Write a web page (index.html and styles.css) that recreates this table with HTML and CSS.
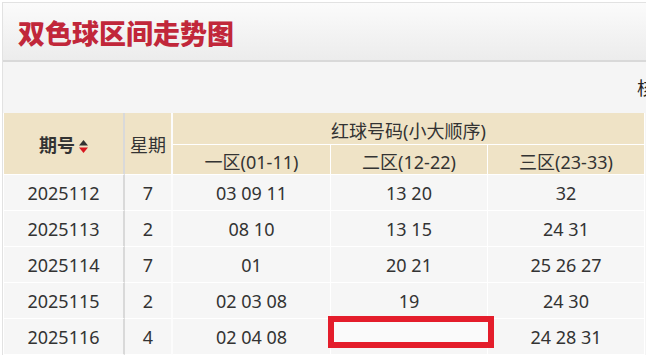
FILE: index.html
```html
<!DOCTYPE html>
<html lang="zh-CN">
<head>
<meta charset="utf-8">
<title>双色球区间走势图</title>
<link rel="stylesheet" href="styles.css">
</head>
<body>
<div class="page">
  <header class="title-bar">
    <h1 class="title">双色球区间走势图</h1>
  </header>
  <div class="toolbar"><span class="tool-text">核查</span></div>
  <table class="trend">
    <colgroup>
      <col class="w-issue">
      <col class="w-week">
      <col class="w-zone1">
      <col class="w-zone">
      <col class="w-zone">
    </colgroup>
    <thead>
      <tr class="h-row1">
        <th rowspan="2" class="c-issue strong">期号<svg class="sort" width="9" height="13" viewBox="0 0 9 13"><polygon points="4.5,0 9,5.5 0,5.5" fill="#333"/><polygon points="0,7.5 9,7.5 4.5,13" fill="#d8171f"/></svg></th>
        <th rowspan="2" class="c-week">星期</th>
        <th colspan="3" class="group">红球号码(小大顺序)</th>
      </tr>
      <tr class="h-row2">
        <th>一区(01-11)</th>
        <th>二区(12-22)</th>
        <th>三区(23-33)</th>
      </tr>
    </thead>
    <tbody>
      <tr><td class="c-issue">2025112</td><td class="c-week">7</td><td>03 09 11</td><td>13 20</td><td>32</td></tr>
      <tr><td class="c-issue">2025113</td><td class="c-week">2</td><td>08 10</td><td>13 15</td><td>24 31</td></tr>
      <tr><td class="c-issue">2025114</td><td class="c-week">7</td><td>01</td><td>20 21</td><td>25 26 27</td></tr>
      <tr><td class="c-issue">2025115</td><td class="c-week">2</td><td>02 03 08</td><td>19</td><td>24 30</td></tr>
      <tr><td class="c-issue">2025116</td><td class="c-week">4</td><td>02 04 08</td><td class="masked"><span class="mark"></span></td><td>24 28 31</td></tr>
    </tbody>
  </table>
</div>
</body>
</html>
```

FILE: styles.css
```css
html, body {
  margin: 0;
  padding: 0;
  overflow: hidden;
  background: #fff;
}

body {
  font-family: "Noto Sans", "Noto Sans CJK SC", sans-serif;
  color: #333;
}

.page {
  margin: 2px 0 0 2px;
  border-top: 1px solid #e2e2e2;
  border-left: 1px solid #e2e2e2;
  background: #f5f5f5;
  height: 360px;
}

.title-bar {
  height: 57px;
  border-bottom: 2px solid #d9d9d9;
  background: linear-gradient(#fbfbfb, #ececec);
  padding-left: 15px;
  display: flex;
  align-items: center;
}

.title {
  margin: 2px 0 0 0;
  font-family: "Noto Sans CJK SC", sans-serif;
  font-size: 27px;
  font-weight: 900;
  line-height: 1;
  color: #c1273a;
}

.toolbar {
  height: 51px;
  line-height: 51px;
  padding-left: 634px;
  white-space: nowrap;
  font-family: "Noto Sans CJK SC", sans-serif;
  font-size: 18px;
  color: #222;
}

.trend {
  border-collapse: separate;
  border-spacing: 0;
  table-layout: fixed;
  width: 642px;
  border-left: 1px solid #fff;
  font-size: 18px;
}

.w-issue { width: 121px; }
.w-week { width: 48px; }
.w-zone1 { width: 158px; }
.w-zone { width: 157px; }

.trend th,
.trend td {
  padding: 0;
  text-align: center;
  font-weight: 400;
  border-right: 1px solid #fff;
  border-bottom: 1px solid #fff;
  white-space: nowrap;
}

.trend th {
  background: #efe3c6;
  color: #333;
  font-family: "Noto Sans", "Noto Sans CJK SC", sans-serif;
}

.trend td {
  background: #f6f6f6;
  color: #333;
  padding-top: 1px;
}

.trend .c-issue {
  border-right: 2px solid #d9d9d9;
}

.trend .c-week {
  border-right: 2px solid #fcfcfc;
}

.trend th.strong {
  font-weight: 700;
  color: #333;
}

.h-row1 { height: 32px; }
.h-row2 { height: 30px; }
.trend tbody tr { height: 36px; }

.h-row1 .group,
.h-row2 th {
  padding-top: 3px;
}

.sort {
  display: inline-block;
  vertical-align: -1px;
  margin-left: 4px;
}

.masked {
  position: relative;
}

.mark {
  position: absolute;
  left: -3px;
  top: -3px;
  width: 154px;
  height: 20px;
  border: 6px solid #e41d2b;
  background: #fafafa;
}
```
